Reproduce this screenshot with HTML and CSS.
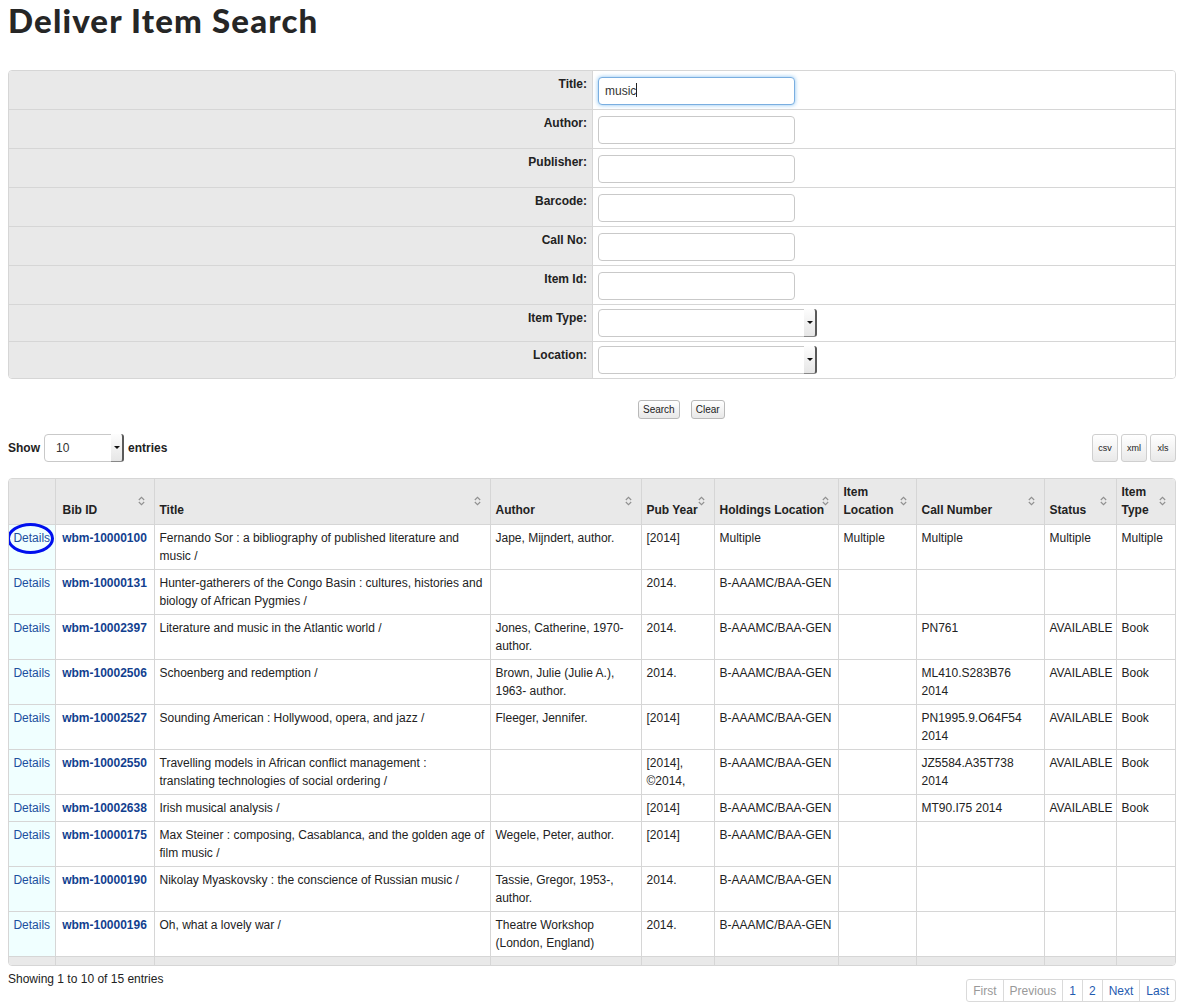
FILE: index.html
```html
<!DOCTYPE html>
<html>
<head>
<meta charset="utf-8">
<title>Deliver Item Search</title>
<link rel="stylesheet" href="styles.css">
</head>
<body>
<h1 class="page-title">Deliver Item Search</h1>

<div class="search-form">
  <div class="f-label">Title:</div><div class="f-field"><div class="f-input focused">music<span class="caret"></span></div></div>
  <div class="f-label">Author:</div><div class="f-field"><div class="f-input"></div></div>
  <div class="f-label">Publisher:</div><div class="f-field"><div class="f-input"></div></div>
  <div class="f-label">Barcode:</div><div class="f-field"><div class="f-input"></div></div>
  <div class="f-label">Call No:</div><div class="f-field"><div class="f-input"></div></div>
  <div class="f-label">Item Id:</div><div class="f-field"><div class="f-input"></div></div>
  <div class="f-label">Item Type:</div><div class="f-field sel"><div class="f-select"><span class="sel-val"></span><span class="sel-arrow"><i class="tri"></i></span></div></div>
  <div class="f-label">Location:</div><div class="f-field sel"><div class="f-select"><span class="sel-val"></span><span class="sel-arrow"><i class="tri"></i></span></div></div>
</div>

<div class="form-actions">
  <span class="btn btn-search">Search</span>
  <span class="btn btn-clear">Clear</span>
</div>

<div class="toolbar">
  <div class="length">
    <b>Show</b>
    <div class="len-select"><span class="sel-val">10</span><span class="sel-arrow"><i class="tri"></i></span></div>
    <b>entries</b>
  </div>
  <div class="exports">
    <span class="xbtn">csv</span><span class="xbtn">xml</span><span class="xbtn">xls</span>
  </div>
</div>

<div class="table-wrap">
<table class="results">
  <colgroup>
    <col class="c-det"><col class="c-bib"><col class="c-title"><col class="c-author"><col class="c-year"><col class="c-hold"><col class="c-iloc"><col class="c-call"><col class="c-status"><col class="c-type">
  </colgroup>
  <thead>
    <tr>
      <th></th>
      <th class="sortable">Bib ID<i class="sort"></i></th>
      <th class="sortable">Title<i class="sort"></i></th>
      <th class="sortable">Author<i class="sort"></i></th>
      <th class="sortable">Pub Year<i class="sort"></i></th>
      <th class="sortable">Holdings Location<i class="sort"></i></th>
      <th class="sortable">Item Location<i class="sort"></i></th>
      <th class="sortable">Call Number<i class="sort"></i></th>
      <th class="sortable">Status<i class="sort"></i></th>
      <th class="sortable">Item Type<i class="sort"></i></th>
    </tr>
  </thead>
  <tbody>
    <tr><td class="det first"><a>Details</a><span class="annot"></span></td><td class="bib"><a>wbm-10000100</a></td><td>Fernando Sor : a bibliography of published literature and music /</td><td>Jape, Mijndert, author.</td><td>[2014]</td><td>Multiple</td><td>Multiple</td><td>Multiple</td><td>Multiple</td><td>Multiple</td></tr>
    <tr><td class="det"><a>Details</a></td><td class="bib"><a>wbm-10000131</a></td><td>Hunter-gatherers of the Congo Basin : cultures, histories and biology of African Pygmies /</td><td></td><td>2014.</td><td>B-AAAMC/BAA-GEN</td><td></td><td></td><td></td><td></td></tr>
    <tr><td class="det"><a>Details</a></td><td class="bib"><a>wbm-10002397</a></td><td>Literature and music in the Atlantic world /</td><td>Jones, Catherine, 1970- author.</td><td>2014.</td><td>B-AAAMC/BAA-GEN</td><td></td><td>PN761</td><td>AVAILABLE</td><td>Book</td></tr>
    <tr><td class="det"><a>Details</a></td><td class="bib"><a>wbm-10002506</a></td><td>Schoenberg and redemption /</td><td>Brown, Julie (Julie A.), 1963- author.</td><td>2014.</td><td>B-AAAMC/BAA-GEN</td><td></td><td>ML410.S283B76 2014</td><td>AVAILABLE</td><td>Book</td></tr>
    <tr><td class="det"><a>Details</a></td><td class="bib"><a>wbm-10002527</a></td><td>Sounding American : Hollywood, opera, and jazz /</td><td>Fleeger, Jennifer.</td><td>[2014]</td><td>B-AAAMC/BAA-GEN</td><td></td><td>PN1995.9.O64F54 2014</td><td>AVAILABLE</td><td>Book</td></tr>
    <tr><td class="det"><a>Details</a></td><td class="bib"><a>wbm-10002550</a></td><td>Travelling models in African conflict management : translating technologies of social ordering /</td><td></td><td>[2014], ©2014,</td><td>B-AAAMC/BAA-GEN</td><td></td><td>JZ5584.A35T738 2014</td><td>AVAILABLE</td><td>Book</td></tr>
    <tr><td class="det"><a>Details</a></td><td class="bib"><a>wbm-10002638</a></td><td>Irish musical analysis /</td><td></td><td>[2014]</td><td>B-AAAMC/BAA-GEN</td><td></td><td>MT90.I75 2014</td><td>AVAILABLE</td><td>Book</td></tr>
    <tr><td class="det"><a>Details</a></td><td class="bib"><a>wbm-10000175</a></td><td>Max Steiner : composing, Casablanca, and the golden age of film music /</td><td>Wegele, Peter, author.</td><td>[2014]</td><td>B-AAAMC/BAA-GEN</td><td></td><td></td><td></td><td></td></tr>
    <tr><td class="det"><a>Details</a></td><td class="bib"><a>wbm-10000190</a></td><td>Nikolay Myaskovsky : the conscience of Russian music /</td><td>Tassie, Gregor, 1953-, author.</td><td>2014.</td><td>B-AAAMC/BAA-GEN</td><td></td><td></td><td></td><td></td></tr>
    <tr><td class="det"><a>Details</a></td><td class="bib"><a>wbm-10000196</a></td><td>Oh, what a lovely war /</td><td>Theatre Workshop (London, England)</td><td>2014.</td><td>B-AAAMC/BAA-GEN</td><td></td><td></td><td></td><td></td></tr>
  </tbody>
  <tfoot>
    <tr><td></td><td></td><td></td><td></td><td></td><td></td><td></td><td></td><td></td><td></td></tr>
  </tfoot>
</table>
</div>

<div class="table-footer">
  <div class="info">Showing 1 to 10 of 15 entries</div>
  <div class="pager">
    <span class="pg disabled">First</span><span class="pg disabled">Previous</span><span class="pg">1</span><span class="pg">2</span><span class="pg">Next</span><span class="pg">Last</span>
  </div>
</div>
</body>
</html>
```

FILE: styles.css
```css
html, body {
  background: #fff;
}
body {
  margin: 0 7px 0 8px;
  font-family: "Liberation Sans", Arial, Helvetica, sans-serif;
  font-size: 12px;
  line-height: 18px;
  color: #222;
}

.page-title {
  margin: 0 0 30px 0;
  font-family: Lato, "Open Sans", sans-serif;
  font-weight: 900;
  font-size: 33px;
  line-height: 40px;
  color: #262626;
  letter-spacing: 1.15px;
}

/* search form */
.search-form {
  display: grid;
  grid-template-columns: 584px 1fr;
  border: 1px solid #d6d6d6;
  border-radius: 4px;
  overflow: hidden;
}
.f-label {
  background: #e9e9e9;
  border-right: 1px solid #d6d6d6;
  border-top: 1px solid #d6d6d6;
  text-align: right;
  font-weight: bold;
  padding: 4px 5px 0 5px;
  color: #222;
}
.f-field {
  border-top: 1px solid #d6d6d6;
  padding: 6px 5px 4px 5px;
  background: #fff;
}
.f-field.sel {
  padding: 4px 5px 4px 5px;
}
.search-form > .f-label:first-child,
.search-form > .f-label:first-child + .f-field {
  border-top: none;
}
.f-input {
  box-sizing: border-box;
  width: 197px;
  height: 28px;
  border: 1px solid #c9c9c9;
  border-radius: 4px;
  padding: 5px 6px;
  font-size: 12px;
  line-height: 16px;
  color: #333;
  background: #fff;
}
.f-input.focused {
  border-color: #7aaee0;
  box-shadow: 0 0 4px rgba(82, 168, 236, 0.7);
}
.caret {
  display: inline-block;
  width: 1px;
  height: 14px;
  background: #222;
  vertical-align: -2px;
}
.f-select, .len-select {
  box-sizing: border-box;
  display: flex;
  width: 219px;
  height: 28px;
  border: 1px solid #c9c9c9;
  border-radius: 4px;
  background: #fff;
}
.sel-val {
  flex: 1;
  padding: 4px 11px;
  font-size: 12px;
  line-height: 18px;
  color: #333;
}
.sel-arrow {
  width: 11px;
  display: flex;
  align-items: center;
  justify-content: center;
  background: linear-gradient(#fdfdfd, #e6e6e6);
  border-right: 2px solid #5a5a5a;
  border-bottom: 1px solid #888;
  border-radius: 0 3px 3px 0;
  margin: -1px -1px -1px 0;
}
.tri {
  display: block;
  width: 0;
  height: 0;
  border-left: 3px solid transparent;
  border-right: 3px solid transparent;
  border-top: 3px solid #111;
}

/* buttons */
.form-actions {
  display: flex;
  gap: 11px;
  padding-left: 630px;
  margin-top: 21px;
}
.btn {
  box-sizing: border-box;
  height: 19px;
  padding: 0 4px;
  font-size: 10px;
  line-height: 17px;
  color: #222;
  border: 1px solid #b9b9b9;
  border-radius: 3px;
  background: linear-gradient(#ffffff, #e8e8e8);
}

/* toolbar */
.toolbar {
  display: flex;
  justify-content: space-between;
  align-items: center;
  margin-top: 15px;
  margin-right: 0;
}
.length {
  display: flex;
  align-items: center;
  gap: 4px;
}
.len-select {
  width: 80px;
  height: 28px;
}
.len-select .sel-val {
  padding: 4px 11px;
}
.exports {
  display: flex;
  gap: 3px;
}
.xbtn {
  box-sizing: border-box;
  height: 28px;
  padding: 0 5px;
  min-width: 26px;
  font-size: 9px;
  line-height: 26px;
  text-align: center;
  color: #222;
  border: 1px solid #cfcfcf;
  border-radius: 3px;
  background: linear-gradient(#ffffff, #e9e9e9);
}

/* results table */
.table-wrap {
  margin-top: 16px;
  border: 1px solid #d6d6d6;
  border-radius: 4px;
  overflow: hidden;
}
.results {
  width: 100%;
  table-layout: fixed;
  border-collapse: collapse;
}
.c-det { width: 46px; }
.c-bib { width: 99px; }
.c-title { width: 336px; }
.c-author { width: 151px; }
.c-year { width: 73px; }
.c-hold { width: 124px; }
.c-iloc { width: 78px; }
.c-call { width: 128px; }
.c-status { width: 72px; }
.c-type { width: 59px; }

.results th,
.results td {
  border-left: 1px solid #d6d6d6;
  border-top: 1px solid #d6d6d6;
  padding: 4px 5px;
  text-align: left;
  vertical-align: top;
}
.results tr > :first-child {
  border-left: none;
}
.results thead th {
  border-top: none;
  background: #e9e9e9;
  vertical-align: bottom;
  font-weight: bold;
  padding: 4px 4px 5px 5px;
  position: relative;
  color: #222;
}
.results thead th:nth-child(2) {
  padding-left: 7px;
}
.sort {
  position: absolute;
  right: 9px;
  top: 17px;
  width: 7px;
  height: 10px;
  background: url("data:image/svg+xml;utf8,<svg xmlns='http://www.w3.org/2000/svg' width='7' height='10' viewBox='0 0 7 10'><path d='M0.8 4 L3.5 1.3 L6.2 4 M0.8 6 L3.5 8.7 L6.2 6' fill='none' stroke='%23909090' stroke-width='1.1'/></svg>") no-repeat;
}
.results td.det {
  background: #f0ffff;
  text-align: center;
  padding-left: 2px;
  padding-right: 2px;
  position: relative;
}
.results td.bib {
  text-align: center;
  padding-left: 2px;
  padding-right: 2px;
}
.det a {
  color: #1d4f9e;
}
.bib a {
  color: #123f8f;
  font-weight: bold;
}
.annot {
  position: absolute;
  left: -2px;
  top: -2px;
  width: 47px;
  height: 31px;
  box-sizing: border-box;
  border: 3px solid #0010ee;
  border-radius: 50%;
}
.results tfoot td {
  background: #e9e9e9;
  height: 0;
  padding: 4px 5px;
  line-height: 0;
}

/* footer */
.table-footer {
  display: flex;
  justify-content: space-between;
  align-items: flex-start;
}
.info {
  margin-top: 4px;
  color: #222;
}
.pager {
  display: flex;
  margin-top: 13px;
  border: 1px solid #dadada;
  border-radius: 3px;
}
.pg {
  padding: 3px 6px 2px;
  line-height: 16px;
  border-left: 1px solid #dadada;
  color: #1f5bb0;
}
.pg:first-child {
  border-left: none;
}
.pg.disabled {
  color: #999;
}
```
